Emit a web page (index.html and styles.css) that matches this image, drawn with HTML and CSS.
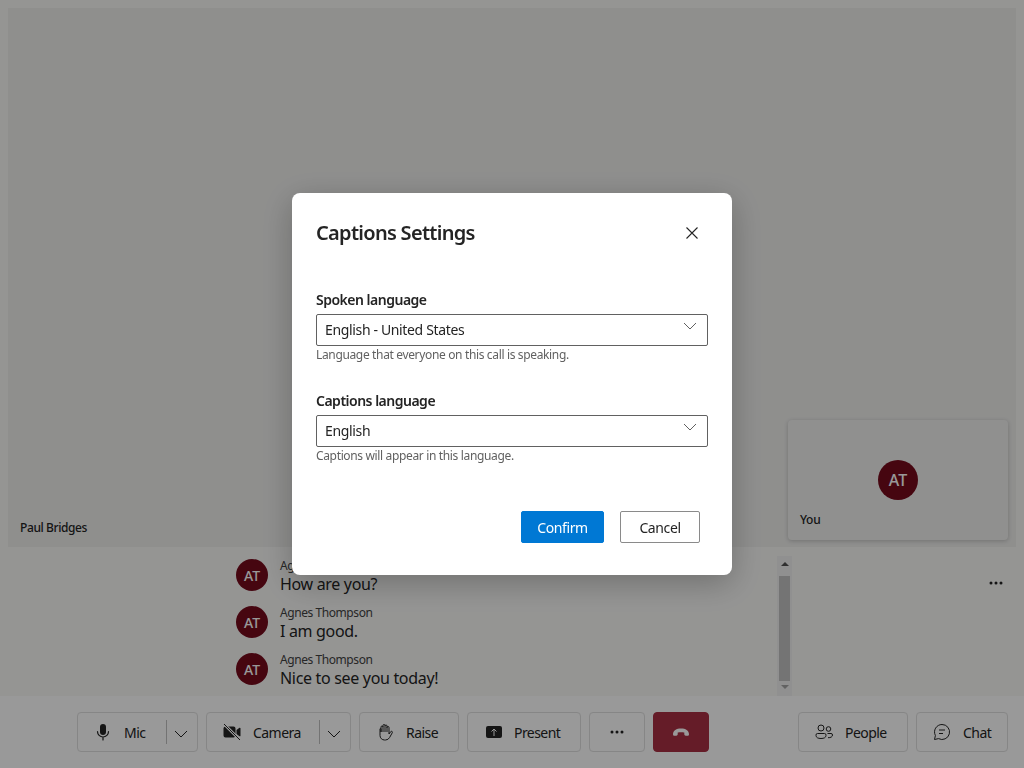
FILE: index.html
```html
<!DOCTYPE html>
<html>
<head>
    <title>Call</title>
    <link rel="stylesheet" href="styles.css">
</head>
<body>
    <div class="stage">
        <div class="remote-name">Paul Bridges</div>
        <div class="local-tile">
            <div class="tile-avatar">
                <div class="avatar avatar-large">AT</div>
            </div>
            <div class="local-name">You</div>
        </div>
    </div>

    <div class="captions">
        <div class="caption-list">
            <div class="caption">
                <div class="avatar">AT</div>
                <div>
                    <div class="caption-name">Agnes Thompson</div>
                    <div class="caption-text">How are you?</div>
                </div>
            </div>
            <div class="caption">
                <div class="avatar">AT</div>
                <div>
                    <div class="caption-name">Agnes Thompson</div>
                    <div class="caption-text">I am good.</div>
                </div>
            </div>
            <div class="caption">
                <div class="avatar">AT</div>
                <div>
                    <div class="caption-name">Agnes Thompson</div>
                    <div class="caption-text">Nice to see you today!</div>
                </div>
            </div>
        </div>
        <div class="scrollbar">
            <div class="arrow-up"></div>
            <div class="thumb"></div>
            <div class="arrow-down"></div>
        </div>
        <div class="caption-more">
            <svg width="16" height="16" viewBox="0 0 16 16"><circle cx="3" cy="8" r="1.5"/><circle cx="8" cy="8" r="1.5"/><circle cx="13" cy="8" r="1.5"/></svg>
        </div>
    </div>

    <div class="controls">
        <div class="btn btn-mic">
            <svg class="icon" width="20" height="20" viewBox="0 0 20 20"><rect x="7" y="2" width="6" height="11" rx="3" fill="#242424"/><path d="M4.5 9.5a5.500 5.500 0 0 0 11 0M10 15v3" fill="none" stroke="#242424" stroke-width="1.200" stroke-linecap="round"/></svg>
            <span>Mic</span>
            <span class="split"></span>
            <svg class="chevron" width="14" height="8" viewBox="0 0 14 8"><path d="M1 1l6 6 6-6" fill="none" stroke="#242424" stroke-width="1"/></svg>
        </div>
        <div class="btn btn-camera">
            <svg class="icon" width="20" height="20" viewBox="0 0 20 20"><path d="M3.500 4.500h8a2 2 0 0 1 2 2v7a2 2 0 0 1-2 2h-8a2 2 0 0 1-2-2v-7a2 2 0 0 1 2-2zM14.500 8l3-2.200c.4-.3 1 0 1 .5v7.400c0 .5-.6.8-1 .5l-3-2.200z" fill="#242424"/><path d="M2 2l16 16" stroke="#fff" stroke-width="2.600"/><path d="M2 2l16 16" stroke="#242424" stroke-width="1"/></svg>
            <span>Camera</span>
            <span class="split"></span>
            <svg class="chevron" width="14" height="8" viewBox="0 0 14 8"><path d="M1 1l6 6 6-6" fill="none" stroke="#242424" stroke-width="1"/></svg>
        </div>
        <div class="btn btn-raise">
            <svg class="icon" width="20" height="20" viewBox="0 0 20 20"><path d="M6 10V5a1 1 0 0 1 2 0V3.500a1 1 0 0 1 2 0V4a1 1 0 0 1 2 0v1.500a1 1 0 0 1 2 0v6.500l1.700-2.300c.9-1 2.200 0 1.600 1l-2.700 4.800a4.700 4.700 0 0 1-4.100 2.500H9.500A4.500 4.500 0 0 1 5 13.500V7a.5.500 0 0 1 1 0zM8 5v5M10 4v6M12 5v5" fill="none" stroke="#242424" stroke-width="1"/></svg>
            <span>Raise</span>
        </div>
        <div class="btn btn-present">
            <svg class="icon" width="18" height="14" viewBox="0 0 18 14"><rect x="1" y="1" width="16" height="12" rx="2" fill="#242424"/><path d="M9 11V4M6.500 6.500L9 4l2.500 2.500" fill="none" stroke="#fff" stroke-width="1"/></svg>
            <span>Present</span>
        </div>
        <div class="btn btn-more">
            <svg width="16" height="16" viewBox="0 0 16 16" fill="#242424"><circle cx="3" cy="8" r="1.500"/><circle cx="8" cy="8" r="1.500"/><circle cx="13" cy="8" r="1.500"/></svg>
        </div>
        <div class="btn btn-hangup">
            <svg width="18" height="10" viewBox="0 0 18 10"><path d="M1 7.200C1 3.500 4.500 1.500 9 1.500s8 2 8 5.700c0 1-.7 1.500-1.500 1.500h-1.800c-.8 0-1.400-.6-1.400-1.400V5.600C11.300 5 6.700 5 5.700 5.600v1.700c0 .8-.6 1.400-1.400 1.400H2.500C1.700 8.700 1 8.200 1 7.200z" fill="#fff"/></svg>
        </div>
        <div class="controls-right">
            <div class="btn btn-people">
                <svg class="icon" width="20" height="20" viewBox="0 0 20 20"><circle cx="7" cy="6" r="3" fill="none" stroke="#242424"/><circle cx="14.500" cy="7" r="2.300" fill="none" stroke="#242424"/><path d="M3.500 11.500h7a1.500 1.500 0 0 1 1.500 1.500v.5c0 2-2 3-5 3s-5-1-5-3V13a1.500 1.500 0 0 1 1.500-1.500zM13.500 11.500h3.500a1.500 1.500 0 0 1 1.500 1.500c0 1.800-1.800 2.800-4.500 2.700" fill="none" stroke="#242424"/></svg>
                <span>People</span>
            </div>
            <div class="btn btn-chat">
                <svg class="icon" width="20" height="20" viewBox="0 0 20 20"><path d="M10 2.500a7.500 7.500 0 1 1-3.500 14.100L2.500 17.500l.9-4A7.500 7.500 0 0 1 10 2.500z" fill="none" stroke="#242424"/><path d="M7 8h6M7 11.500h4" stroke="#242424"/></svg>
                <span>Chat</span>
            </div>
        </div>
    </div>

    <div class="overlay">
        <div class="dialog">
            <div class="dialog-head">
                <h2>Captions Settings</h2>
                <svg width="12" height="12" viewBox="0 0 12 12"><path d="M.5.500l11 11M11.500.500l-11 11" stroke="#242424" stroke-width="1.100"/></svg>
            </div>
            <label class="field-label">Spoken language</label>
            <div class="select">
                <span>English - United States</span>
                <svg width="14" height="8" viewBox="0 0 14 8"><path d="M1 1l6 6 6-6" fill="none" stroke="#616161" stroke-width="1"/></svg>
            </div>
            <div class="hint">Language that everyone on this call is speaking.</div>
            <label class="field-label field-second">Captions language</label>
            <div class="select">
                <span>English</span>
                <svg width="14" height="8" viewBox="0 0 14 8"><path d="M1 1l6 6 6-6" fill="none" stroke="#616161" stroke-width="1"/></svg>
            </div>
            <div class="hint">Captions will appear in this language.</div>
            <div class="dialog-actions">
                <div class="action action-primary">Confirm</div>
                <div class="action">Cancel</div>
            </div>
        </div>
    </div>
</body>
</html>
```

FILE: styles.css
```css
* {
    box-sizing: border-box;
}
body {
    margin: 0;
    width: 1024px;
    height: 768px;
    overflow: hidden;
    display: flex;
    flex-direction: column;
    font-family: "Noto Sans", "Open Sans", sans-serif;
    color: #242424;
    background-color: #f8f8f6;
}
.stage {
    height: 539px;
    margin: 8px 8px 0;
    padding: 0 8px 7px 12px;
    display: flex;
    justify-content: space-between;
    align-items: flex-end;
    background-color: #eeeeec;
    flex-shrink: 0;
}
.remote-name {
    font-size: 12px;
    font-weight: 500;
    line-height: 16px;
    letter-spacing: -0.4px;
    margin-bottom: 4px;
}
.local-tile {
    width: 220px;
    height: 120px;
    padding: 0 12px;
    border-radius: 4px;
    background-color: #f0f0ee;
    box-shadow: 0 1px 4px rgba(0, 0, 0, 0.2);
    display: flex;
    flex-direction: column;
}
.tile-avatar {
    display: flex;
    justify-content: center;
    padding-top: 40px;
}
.local-name {
    margin-top: 12px;
    font-size: 12px;
    font-weight: 500;
    line-height: 16px;
    letter-spacing: -0.3px;
}
.avatar {
    width: 32px;
    height: 32px;
    border-radius: 50%;
    background-color: #750b1c;
    color: white;
    font-size: 14px;
    font-weight: 500;
    display: flex;
    align-items: center;
    justify-content: center;
    flex-shrink: 0;
}
.avatar-large {
    width: 40px;
    height: 40px;
    font-size: 16px;
}
.captions {
    height: 149px;
    padding: 9px 20px 0 236px;
    display: flex;
    align-items: flex-start;
    flex-shrink: 0;
}
.caption-list {
    width: 541px;
    padding-top: 3px;
}
.caption {
    display: flex;
    gap: 12px;
    margin-bottom: 11px;
}
.caption-name {
    font-size: 12px;
    line-height: 14px;
    letter-spacing: -0.43px;
    color: #424242;
}
.caption-text {
    font-size: 16px;
    line-height: 22px;
    letter-spacing: -0.32px;
}
.scrollbar {
    width: 15px;
    height: 140px;
    padding: 0 2px;
    background-color: #f1f1f1;
    display: flex;
    flex-direction: column;
    align-items: center;
}
.thumb {
    width: 11px;
    height: 105px;
    background-color: #c1c1c1;
}
.arrow-up {
    margin: 6px 0 10px;
    border-left: 4px solid transparent;
    border-right: 4px solid transparent;
    border-bottom: 4px solid #505050;
    width: 0;
    height: 0;
    box-sizing: content-box;
}
.arrow-down {
    margin-top: 4px;
    border-left: 4px solid transparent;
    border-right: 4px solid transparent;
    border-top: 4px solid #a3a3a3;
    width: 0;
    height: 0;
    box-sizing: content-box;
}
.caption-more {
    margin-left: auto;
    margin-top: 19px;
    line-height: 0;
    fill: #242424;
}
.controls {
    height: 72px;
    padding: 16px 16px 16px 77px;
    display: flex;
    gap: 8px;
    background-color: white;
    flex-shrink: 0;
}
.controls-right {
    margin-left: auto;
    display: flex;
    gap: 8px;
}
.btn {
    height: 40px;
    display: flex;
    align-items: center;
    border: 1px solid #e0e0e0;
    border-radius: 4px;
    font-size: 14px;
    letter-spacing: -0.55px;
}
.btn-mic {
    width: 121px;
    padding-left: 15px;
}
.btn-camera {
    width: 145px;
    padding-left: 15px;
}
.btn-raise {
    width: 100px;
    padding-left: 15px;
}
.btn-present {
    width: 114px;
    padding-left: 17px;
}
.btn-more {
    width: 56px;
    justify-content: center;
}
.btn-hangup {
    width: 56px;
    justify-content: center;
    background-color: #a82f43;
    border-color: #a82f43;
}
.btn-people {
    width: 110px;
    padding-left: 15px;
}
.btn-chat {
    width: 92px;
    padding-left: 15px;
}
.icon {
    margin-right: 11px;
    flex-shrink: 0;
}
.split {
    width: 1px;
    height: 24px;
    background-color: #c0c0c0;
    margin-left: 21px;
    margin-right: 7px;
}
.btn-camera .split {
    margin-left: 18px;
}
.chevron {
    margin-top: 4px;
}
.overlay {
    position: fixed;
    top: 0;
    left: 0;
    width: 100%;
    height: 100%;
    padding-top: 193px;
    display: flex;
    justify-content: center;
    align-items: flex-start;
    background-color: rgba(0, 0, 0, 0.4);
}
.dialog {
    width: 440px;
    height: 382px;
    padding: 24px 24px 0;
    background-color: white;
    border-radius: 8px;
    box-shadow: 0 8px 32px rgba(0, 0, 0, 0.25);
}
.dialog-head {
    display: flex;
    justify-content: space-between;
    align-items: center;
    height: 32px;
    padding-right: 10px;
    margin-bottom: 41px;
}
.dialog-head h2 {
    margin: 0;
    font-size: 20px;
    font-weight: 600;
    line-height: 32px;
    letter-spacing: -0.7px;
}
.field-label {
    display: block;
    font-size: 14px;
    font-weight: 600;
    line-height: 20px;
    letter-spacing: -0.5px;
    margin-bottom: 4px;
}
.field-second {
    margin-top: 28px;
}
.select {
    height: 32px;
    padding: 0 10px 2px 8px;
    border: 1px solid #616161;
    border-radius: 2px;
    display: flex;
    justify-content: space-between;
    align-items: center;
    font-size: 14px;
    letter-spacing: -0.35px;
}
.select svg {
    margin-top: -6px;
}
.hint {
    margin-top: 1px;
    font-size: 12px;
    line-height: 16px;
    letter-spacing: -0.35px;
    color: #616161;
}
.dialog-actions {
    margin-top: 47px;
    padding-right: 8px;
    display: flex;
    justify-content: flex-end;
    gap: 16px;
}
.action {
    width: 80px;
    height: 32px;
    border: 1px solid #8a8a8a;
    border-radius: 2px;
    display: flex;
    align-items: center;
    justify-content: center;
    font-size: 14px;
    letter-spacing: -0.4px;
}
.action-primary {
    width: 83px;
    background-color: #0078d4;
    border-color: #0078d4;
    color: white;
}
```
